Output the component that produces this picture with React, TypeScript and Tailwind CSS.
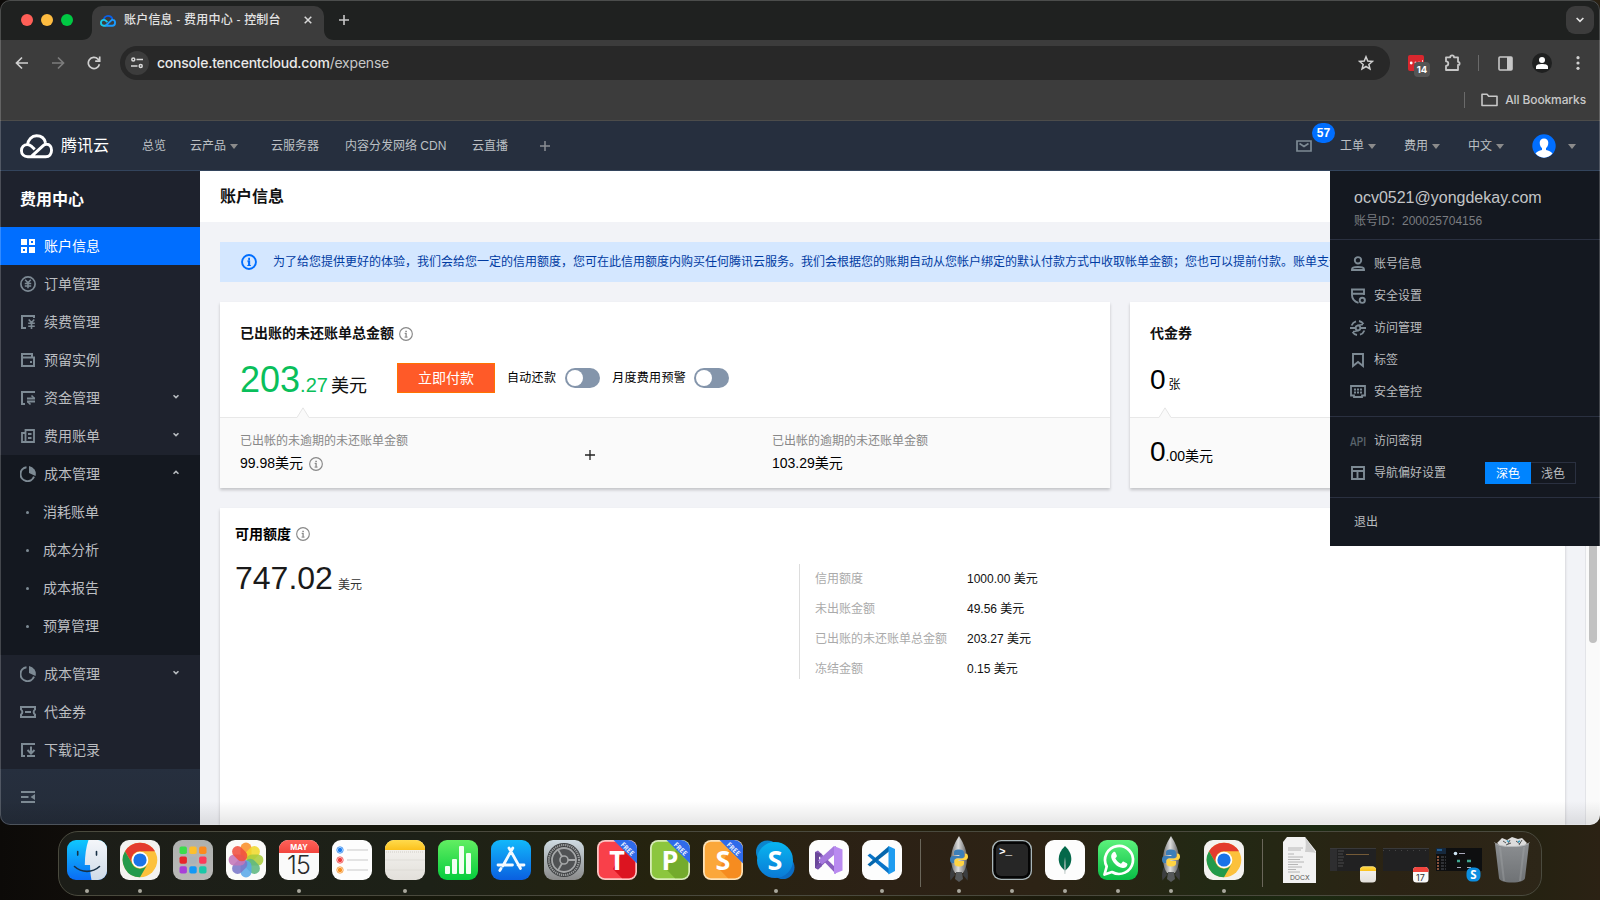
import React from "react";

const G = "#7d8a94";

/* ---------- shared pieces ---------- */

function TencentCloud({ className, stroke }: { className: string; stroke: string }) {
  return (
    <svg className={className} viewBox="0 0 34 25" fill="none" stroke={stroke} strokeWidth="3" strokeLinejoin="round">
      <path d="M7.500 11.500C8 5.500 12.300 1.500 17 1.500c4.800 0 8.300 3 9.300 7.300" />
      <path d="M11.500 22.900 24.200 11.300c1.100-.9 2.200-1.200 3.300-1.100 3 .1 5 2.600 5 6.200 0 3.900-2.300 6.600-6 6.600H8c-4 0-6.500-2.500-6.500-6.100 0-3.700 2.500-6.300 6-6.300 1.900 0 3.500.9 4.800 2.100l2.900 2.800" />
    </svg>
  );
}

function Caret({ className = "" }: { className?: string }) {
  return (
    <svg className={`h-[5px] w-2 shrink-0 ${className}`} viewBox="0 0 8 5">
      <path d="M0 0h8L4 5z" fill="#8b8b8b" />
    </svg>
  );
}

function Info({ className, color, sw = 1.3 }: { className: string; color: string; sw?: number }) {
  return (
    <svg className={className} viewBox="0 0 16 16" fill="none" stroke={color} strokeWidth={sw}>
      <circle cx="8" cy="8" r={8 - sw / 2 - 0.1} />
      <path d="M6.500 7.300h1.600V12M7.200 4.900h1.800" strokeWidth={sw + 0.2} />
      <path d="M6.300 11.500h3.600" strokeWidth="1" />
    </svg>
  );
}

/* ---------- browser chrome ---------- */

function TabStrip() {
  return (
    <div className="flex h-10 shrink-0 items-start bg-[#1f2120]">
      <div className="flex gap-2 pt-[14px] pl-[21px]">
        <span className="h-3 w-3 rounded-full bg-[#ff5f57]" />
        <span className="h-3 w-3 rounded-full bg-[#febc40]" />
        <span className="h-3 w-3 rounded-full bg-[#00c943]" />
      </div>
      <svg className="mt-[30px] ml-[9px] h-[10px] w-[10px]" viewBox="0 0 10 10">
        <path d="M10 0v10H0C6 10 10 6 10 0z" fill="#3c3c3c" />
      </svg>
      <div className="mt-[6px] flex h-[34px] w-[232px] items-center rounded-t-[10px] bg-[#3c3c3c] pb-[6px] pl-2">
        <svg className="mt-[1px] h-4 w-4" viewBox="0 0 34 30" fill="none" strokeWidth="4" strokeLinejoin="round">
          <path d="M7.500 14C8 8 12.300 4 17 4c4.800 0 8.300 3 9.300 7.300" stroke="#0a5fe8" />
          <path d="M11.500 25 24.200 13.600c1.100-.9 2.200-1.200 3.300-1.100 3 .1 4.500 2.600 4.500 6 0 3.900-2 6.500-6 6.500H11" stroke="#1a9bff" />
          <path d="M12 25H8c-4 0-6-2.500-6-6.100 0-3.700 2.500-6.300 6-6.300 1.900 0 3.500.9 4.800 2.100l2.900 2.800" stroke="#19c8e8" />
        </svg>
        <span className="ml-2 w-[170px] text-[12px] leading-4 font-medium tracking-[0.2px] whitespace-pre text-[#e3e3e3]">账户信息 - 费用中心 - 控制台</span>
        <svg className="ml-[10px] h-[8px] w-[8px]" viewBox="0 0 9 9" stroke="#d8d8d8" strokeWidth="1.700">
          <path d="M.8.8l7.400 7.400M8.200.8.800 8.200" />
        </svg>
      </div>
      <svg className="mt-[30px] h-[10px] w-[10px]" viewBox="0 0 10 10">
        <path d="M0 0v10h10C4 10 0 6 0 0z" fill="#3c3c3c" />
      </svg>
      <svg className="mt-[15px] ml-[5px] h-[10px] w-[10px]" viewBox="0 0 10 10" stroke="#c8c8c8" strokeWidth="1.600">
        <path d="M5 0v10M0 5h10" />
      </svg>
      <span className="mt-[6px] mr-[6px] ml-auto flex h-7 w-7 items-center justify-center rounded-[9px] bg-[#3c3c3c]">
        <svg className="h-[6px] w-[8px]" viewBox="0 0 9 6" fill="none" stroke="#e3e3e3" strokeWidth="1.800">
          <path d="M.7.8l3.800 3.800L8.300.8" />
        </svg>
      </span>
    </div>
  );
}

function Toolbar() {
  return (
    <div className="flex h-[46px] items-center pl-[15px]">
      <svg className="h-[14px] w-[14px]" viewBox="0 0 14 14" fill="none" stroke="#d0d0d0" strokeWidth="1.700">
        <path d="M13 7H1.800M7 1.500 1.500 7 7 12.500" />
      </svg>
      <svg className="ml-[22px] h-[14px] w-[14px]" viewBox="0 0 14 14" fill="none" stroke="#7c7c7c" strokeWidth="1.700">
        <path d="M1 7h11.200M7 1.500 12.500 7 7 12.500" />
      </svg>
      <svg className="ml-[22px] h-[14px] w-[14px]" viewBox="0 0 14 14" fill="none" stroke="#d0d0d0" strokeWidth="1.700">
        <path d="M12.400 8.200A5.600 5.600 0 1 1 11 3.100L12.500 4.800" />
        <path d="M12.700.6v4.600H8.200" />
      </svg>
      <div className="ml-[19px] flex h-[34px] w-[1270px] shrink-0 items-center rounded-full bg-[#282828] pr-4 pl-[5px]">
        <span className="flex h-6 w-6 items-center justify-center rounded-full bg-[#3c3c3c]">
          <svg className="h-3 w-3" viewBox="0 0 12 12" fill="none" stroke="#d8d8d8" strokeWidth="1.500">
            <circle cx="2.300" cy="2.500" r="1.500" />
            <path d="M5.500 2.500H12M0 9h6.500" />
            <circle cx="9.700" cy="9" r="1.500" />
          </svg>
        </span>
        <span className="ml-2 font-[Inter,Roboto,sans-serif] text-[14px] leading-5 font-medium tracking-[-0.22px] text-[#e8e8e8]">
          console.tencentcloud.com<span className="font-normal text-[#c7c7c7]">/expense</span>
        </span>
        <svg className="ml-auto h-4 w-4" viewBox="0 0 16 16" fill="none" stroke="#d0d0d0" strokeWidth="1.500">
          <path d="M8 1.800l1.750 4.300 4.650.35-3.550 3 1.100 4.550L8 11.500 4.050 14l1.100-4.550-3.550-3 4.650-.35z" />
        </svg>
      </div>
      <div className="relative ml-[18px] h-4 w-4 rounded-[2px] bg-[#d9272e]">
        <svg className="h-4 w-4" viewBox="0 0 16 16" fill="#fff">
          <circle cx="3.200" cy="8" r="1.400" />
          <circle cx="7.500" cy="7.500" r="1" opacity=".7" />
          <circle cx="11" cy="7.500" r="1" opacity=".7" />
          <path d="M14 5h1v3h-1z" opacity=".7" />
        </svg>
        <span className="absolute top-[7px] left-[6px] flex h-[15px] w-4 items-center justify-center rounded-[4px] bg-[#555555] font-[Inter,sans-serif] text-[9.5px] leading-none font-bold text-white">14</span>
      </div>
      <svg className="ml-[20px] h-[18px] w-[18px]" viewBox="0 0 18 18" fill="none" stroke="#c7c7c7" strokeWidth="1.800" strokeLinejoin="round">
        <path d="M2 3.300h4.200a1.900 1.900 0 0 1 3.800 0h4v4.500a1.600 1.600 0 0 1 0 3.200v5H2v-4.100a2.300 2.300 0 0 0 0-4.600z" />
      </svg>
      <span className="ml-[16px] h-4 w-px bg-[#6a6a6a]" />
      <svg className="ml-[19px] h-[15px] w-[15px]" viewBox="0 0 15 15">
        <rect x="1" y="1" width="13" height="13" rx="1" fill="none" stroke="#c7c7c7" strokeWidth="1.600" />
        <path d="M9 1h5v13H9z" fill="#c7c7c7" />
      </svg>
      <span className="ml-[19px] flex h-5 w-5 items-center justify-center rounded-full bg-[#1f2020]">
        <svg className="h-3 w-3" viewBox="0 0 12 12" fill="#fff">
          <circle cx="6" cy="3" r="3" />
          <path d="M0 12V9.500C0 7.800 3 7 6 7s6 .8 6 2.500V12z" />
        </svg>
      </span>
      <svg className="ml-[24px] h-[14px] w-1" viewBox="0 0 4 14" fill="#d0d0d0">
        <circle cx="2" cy="1.700" r="1.600" />
        <circle cx="2" cy="7" r="1.600" />
        <circle cx="2" cy="12.300" r="1.600" />
      </svg>
    </div>
  );
}

function Bookmarks() {
  return (
    <div className="flex h-[34px] items-center justify-end pr-[14px] pb-[6px]">
      <span className="h-4 w-px bg-[#6a6a6a]" />
      <svg className="mr-[7px] ml-4 h-[14px] w-[17px]" viewBox="0 0 17 14" fill="none" stroke="#c7c7c7" strokeWidth="1.600" strokeLinejoin="round">
        <path d="M1 12.500V1.300h5l1.700 2H16v9.200z" />
      </svg>
      <span className="font-[Inter,Roboto,sans-serif] text-[12px] leading-4 font-medium tracking-[-0.12px] text-[#c9c9c9]">All Bookmarks</span>
    </div>
  );
}

/* ---------- console header ---------- */

function ConsoleHeader() {
  return (
    <header className="flex h-[51px] shrink-0 items-center border-t border-b border-t-[#4c4c4a] border-b-[#33445c] bg-[#262f3e] text-[12px] leading-4 text-[#bcc0c4]">
      <TencentCloud className="mt-px ml-[20px] h-[25px] w-[33px]" stroke="#ffffff" />
      <span className="mt-px ml-[8px] w-[81px] text-[16px] leading-6 text-white">腾讯云</span>
      <span className="w-12">总览</span>
      <span className="flex w-[81px] items-center gap-1">云产品<Caret className="mt-px" /></span>
      <span className="w-[74px]">云服务器</span>
      <span className="w-[127px] whitespace-nowrap">内容分发网络 CDN</span>
      <span>云直播</span>
      <svg className="ml-[32px] h-[10px] w-[10px]" viewBox="0 0 10 10" stroke="#8b8f94" strokeWidth="1.500">
        <path d="M5 0v10M0 5h10" />
      </svg>
      <div className="ml-auto flex items-center pr-6">
        <div className="relative mr-[28px] h-3 w-4">
          <svg className="h-3 w-4" viewBox="0 0 16 12" fill="none" stroke="#7d8a94" strokeWidth="1.700">
            <path d="M1 1h14v10H1zM3.500 3.500 8 6.500l4.500-3" />
          </svg>
          <span className="absolute top-[-17px] left-4 flex h-5 w-[23px] items-center justify-center rounded-full bg-[#006eff] text-[12px] font-bold text-white">57</span>
        </div>
        <span className="flex w-16 items-center gap-1">工单<Caret className="mt-px" /></span>
        <span className="flex w-16 items-center gap-1">费用<Caret className="mt-px" /></span>
        <span className="flex w-16 items-center gap-1">中文<Caret className="mt-px" /></span>
        <svg className="h-6 w-6" viewBox="0 0 24 24">
          <circle cx="12" cy="12" r="11.700" fill="#006eff" />
          <path d="M12 4.500c2.700 0 4.300 1.800 4.300 4.300 0 2.600-1 4.300-2.300 5.200v2c2.500.7 5.200 1.300 6.500 3.600A11.700 11.700 0 0 1 12 23.700a11.700 11.700 0 0 1-8.500-4.100c1.300-2.300 4-2.900 6.500-3.600v-2c-1.300-.9-2.300-2.600-2.300-5.200 0-2.500 1.600-4.300 4.300-4.300z" fill="#fff" />
        </svg>
        <Caret className="mt-px ml-3" />
      </div>
    </header>
  );
}

/* ---------- sidebar ---------- */

type Kind = "grid" | "order" | "renew" | "wallet" | "fund" | "bill" | "pie" | "ticket" | "download";

function SideIcon({ kind }: { kind: Kind }) {
  const c = "h-4 w-4 shrink-0";
  const p = { className: c, viewBox: "0 0 16 16", fill: "none", stroke: G, strokeWidth: 2 };
  switch (kind) {
    case "grid":
      return (
        <svg className={c} viewBox="0 0 16 16" fill="#fff" fillRule="evenodd">
          <path d="M1 1h6v6H1zM9 1h6v6H9zm2 2v2h2V3zM1 9h6v6H1zm2 2v2h2v-2zM9 9h6v6H9z" />
        </svg>
      );
    case "order":
      return (
        <svg {...p} strokeWidth={1.700}>
          <circle cx="8" cy="8" r="7.100" />
          <path d="M5.200 3.800 8 6.800l2.800-3M8 6.800v5.500M4.800 7.500h6.400M4.800 10h6.400" strokeWidth="1.500" />
        </svg>
      );
    case "renew":
      return (
        <svg {...p}>
          <path d="M6 14H2V2h12v2M5 2h2" />
          <path d="M8.700 5.500l2.800 3L14.300 5.500M11.500 8.500V15M8.200 9.300h6.600M8.200 12.300h6.600" strokeWidth="1.600" />
        </svg>
      );
    case "wallet":
      return (
        <svg {...p}>
          <path d="M2 15V2h10v3M2 5.500h12V14H1" />
          <path d="M10 9h2v2h-2z" fill={G} stroke="none" />
        </svg>
      );
    case "fund":
      return (
        <svg {...p}>
          <path d="M5 14H2V2h13M7 8.500h8M15 11.500H7" />
          <path d="M11.500 5.500 14.500 8.500M10.500 14.500 7.500 11.500" strokeWidth="1.600" />
        </svg>
      );
    case "bill":
      return (
        <svg {...p} strokeWidth={1.800}>
          <path d="M5.500 14H2V5h3.500M5.500 14V2H14v12zM8 6h3.500M8 10h3.500" />
        </svg>
      );
    case "pie":
      return (
        <svg {...p}>
          <path d="M6.500 1.200a7 7 0 1 0 7.500 9.500" />
          <path d="M9 0a8 8 0 0 1 6.500 10L9 7z" fill={G} stroke="none" />
        </svg>
      );
    case "ticket":
      return (
        <svg {...p}>
          <path d="M1 3h14v2.500a3 3 0 0 0 0 5V13H1v-2.500a3 3 0 0 0 0-5zM5 8h6" />
        </svg>
      );
    default:
      return (
        <svg {...p}>
          <path d="M5 14H2V2h13M7 14h8M11 4.500v7M7.500 8 11 11.500 14.500 8" />
        </svg>
      );
  }
}

function Chevron({ up }: { up?: boolean }) {
  return (
    <svg className="mb-[3px] ml-auto h-[5px] w-[6px]" viewBox="0 0 7 5" fill="none" stroke="#b9bdc1" strokeWidth="1.800">
      <path d={up ? "M.6 4 3.500 1.200 6.400 4" : "M.6 1 3.500 3.800 6.400 1"} />
    </svg>
  );
}

function SideRow({ kind, label, arrow, active }: { kind: Kind; label: string; arrow?: "up" | "down"; active?: boolean }) {
  return (
    <div className={`flex h-[38px] items-center pr-[21px] pl-5 ${active ? "bg-[#006eff] text-white" : ""}`}>
      <SideIcon kind={kind} />
      <span className="ml-2">{label}</span>
      {arrow && <Chevron up={arrow === "up"} />}
    </div>
  );
}

function Sidebar() {
  return (
    <nav className="flex w-[200px] shrink-0 flex-col bg-[#1e222d] text-[14px] leading-5 text-[#bbbdc0]">
      <div className="flex h-14 items-center pt-[2px] pl-[20px] text-[16px] font-bold text-white">费用中心</div>
      <SideRow kind="grid" label="账户信息" active />
      <SideRow kind="order" label="订单管理" />
      <SideRow kind="renew" label="续费管理" />
      <SideRow kind="wallet" label="预留实例" />
      <SideRow kind="fund" label="资金管理" arrow="down" />
      <SideRow kind="bill" label="费用账单" arrow="down" />
      <div className="bg-[#141820] pb-[10px]">
        <SideRow kind="pie" label="成本管理" arrow="up" />
        {["消耗账单", "成本分析", "成本报告", "预算管理"].map((t) => (
          <div key={t} className="flex h-[38px] items-center pl-[26px]">
            <span className="h-[3px] w-[3px] rounded-full bg-[#7d8a94]" />
            <span className="ml-[14px]">{t}</span>
          </div>
        ))}
      </div>
      <SideRow kind="pie" label="成本管理" arrow="down" />
      <SideRow kind="ticket" label="代金券" />
      <SideRow kind="download" label="下载记录" />
      <div className="flex flex-1 items-center bg-linear-to-b from-[#262f3e] to-[#242c39] pl-[21px]">
        <svg className="h-3 w-[14px]" viewBox="0 0 14 12" fill={G}>
          <path d="M0 0h14v2H0zM0 5h7.500v2H0zM0 10h14v2H0zM14 3v6L9.500 6z" />
        </svg>
      </div>
    </nav>
  );
}

/* ---------- content ---------- */

function Toggle() {
  return (
    <span className="mt-[-2px] flex h-5 w-[35px] rounded-full bg-[#8495ab] p-[2px]">
      <span className="h-4 w-4 rounded-full bg-white" />
    </span>
  );
}

function Notch({ className }: { className: string }) {
  return (
    <svg className={`absolute top-[-11px] h-[11px] w-3 ${className}`} viewBox="0 0 12 11">
      <path d="M0 10.500 6 .8l6 9.700V11H0z" fill="#fafafa" />
      <path d="M0 10.500 6 .8l6 9.700" fill="none" stroke="#e5e5e5" />
    </svg>
  );
}

const creditRows = [
  ["信用额度", "1000.00 美元"],
  ["未出账金额", "49.56 美元"],
  ["已出账的未还账单总金额", "203.27 美元"],
  ["冻结金额", "0.15 美元"],
];

const card = "bg-white shadow-[0_2px_3px_rgba(0,0,0,0.2)]";

function Content() {
  return (
    <main className="flex min-w-0 flex-1 flex-col bg-[#f2f3f7] text-[#000000]">
      <div className="flex h-[51px] shrink-0 items-center bg-white pl-5 text-[16px] leading-6 font-bold text-[#111111]">账户信息</div>
      <div className="mt-5 ml-5 flex h-10 w-[1345px] shrink-0 items-center overflow-hidden bg-[#d4e7ff] pl-[21px]">
        <Info className="h-4 w-4 shrink-0" color="#006eff" sw={1.900} />
        <span className="ml-4 text-[12px] leading-4 whitespace-nowrap text-[#003ba2]">
          为了给您提供更好的体验，我们会给您一定的信用额度，您可在此信用额度内购买任何腾讯云服务。我们会根据您的账期自动从您帐户绑定的默认付款方式中收取帐单金额；您也可以提前付款。账单支付
        </span>
      </div>
      <div className="mt-5 ml-5 flex h-[186px] w-[1345px] shrink-0 gap-5">
        <section className={`flex w-[890px] flex-col ${card}`}>
          <div className="h-[115px] shrink-0 px-5 pt-[21px]">
            <div className="flex h-5 items-center gap-[5px] text-[14px] leading-5 font-bold text-[#111111]">
              已出账的未还账单总金额
              <Info className="mt-px h-[14px] w-[14px]" color="#888888" />
            </div>
            <div className="mt-[15px] flex h-[42px] items-center">
              <span className="mt-[8px] w-[157px] text-[36px] leading-[42px] whitespace-nowrap text-[#0abf5b]">
                203<span className="text-[20px]">.27</span> <span className="ml-[-7px] text-[18px] text-[#111111]">美元</span>
              </span>
              <button className="mt-[-2px] flex h-[30px] w-[98px] items-center justify-center border border-[#ff7200] bg-[#ff5a28] text-[14px] text-white">立即付款</button>
              <span className="mt-[-3px] ml-3 text-[12px] leading-4 tracking-[0.3px]">自动还款</span>
              <span className="ml-[9px]"><Toggle /></span>
              <span className="mt-[-3px] ml-3 text-[12px] leading-4 tracking-[0.3px]">月度费用预警</span>
              <span className="ml-[8px]"><Toggle /></span>
            </div>
          </div>
          <div className="relative flex flex-1 border-t border-[#e8e8e8] bg-[#fafafa] pt-[15px] pl-5">
            <Notch className="left-[77px]" />
            <div className="w-[345px]">
              <div className="text-[12px] leading-4 text-[#888888]">已出帐的未逾期的未还账单金额</div>
              <div className="mt-[4px] flex h-5 items-center gap-[6px] text-[14px] leading-5">
                99.98美元
                <Info className="mt-px h-[14px] w-[14px]" color="#888888" />
              </div>
            </div>
            <svg className="mt-[17px] h-[10px] w-[10px]" viewBox="0 0 10 10" stroke="#222" strokeWidth="1.300">
              <path d="M5 0v10M0 5h10" />
            </svg>
            <div className="ml-[177px]">
              <div className="text-[12px] leading-4 text-[#888888]">已出帐的逾期的未还账单金额</div>
              <div className="mt-[4px] text-[14px] leading-5">103.29美元</div>
            </div>
          </div>
        </section>
        <section className={`flex flex-1 flex-col ${card}`}>
          <div className="h-[115px] shrink-0 px-5 pt-[21px]">
            <div className="text-[14px] leading-5 font-bold text-[#111111]">代金券</div>
            <div className="mt-[16px] text-[28px] leading-[42px]">
              0<span className="ml-[3px] text-[12px]">张</span>
            </div>
          </div>
          <div className="relative h-[71px] border-t border-[#e8e8e8] bg-[#fafafa] pl-5 text-[28px] leading-[68px]">
            <Notch className="left-[29px]" />
            0<span className="text-[14px]">.00美元</span>
          </div>
        </section>
      </div>
      <section className={`mt-5 ml-5 w-[1345px] flex-1 px-[15px] pt-4 ${card}`}>
        <div className="flex h-5 items-center gap-[5px] text-[14px] leading-5 font-bold">
          可用额度
          <Info className="h-[14px] w-[14px]" color="#888888" />
        </div>
        <div className="mt-[15px] flex">
          <div className="mt-[-1px] w-[564px] text-[32px] leading-10 text-[#1a1a1a]">
            747.02<span className="ml-[5px] text-[12px] text-[#333333]">美元</span>
          </div>
          <div className="mt-[5px] h-[115px] border-l border-[#dddddd] pl-[15px]">
            {creditRows.map(([k, v]) => (
              <div key={k} className="flex h-[30px] items-center text-[12px] leading-4">
                <span className="w-[152px] text-[#aaaaaa]">{k}</span>
                <span className="text-[#111111]">{v}</span>
              </div>
            ))}
          </div>
        </div>
      </section>
    </main>
  );
}

/* ---------- account menu ---------- */

type MenuKind = "user" | "shield" | "access" | "tag" | "board" | "api" | "layout";

function MenuIcon({ kind }: { kind: MenuKind }) {
  const p = { className: "h-4 w-4 shrink-0", viewBox: "0 0 16 16", fill: "none", stroke: G, strokeWidth: 1.900 };
  switch (kind) {
    case "user":
      return (
        <svg {...p}>
          <circle cx="8" cy="4.300" r="3.200" />
          <path d="M2 14v-.8C2 11.500 4.500 11 8 11s6 .5 6 2.200v.8z" />
        </svg>
      );
    case "shield":
      return (
        <svg {...p}>
          <path d="M8.500 14.800C4 13.500 2 11 2 7V1.500h12V7M2 5.700h12" />
          <circle cx="12.300" cy="12.300" r="2.600" />
        </svg>
      );
    case "access":
      return (
        <svg {...p} strokeWidth={1.800}>
          <path d="M1.600 5.500A7 7 0 0 1 6 1.300M9 1A7 7 0 0 1 13.500 4M14.400 10.500a7 7 0 0 1-4.400 4.200M7 15A7 7 0 0 1 2.500 12M0 8h5.500M10.500 8H16" />
          <circle cx="8" cy="8" r="2.300" />
          <path d="M7 5.500c2 0 3.500-1 6-1M9 10.500c-2 0-3.500 1-6 1" strokeWidth="1.400" />
        </svg>
      );
    case "tag":
      return (
        <svg {...p}>
          <path d="M3 14V2h10v12l-5-4z" />
        </svg>
      );
    case "board":
      return (
        <svg {...p} strokeWidth={1.800}>
          <path d="M1 2h14v9.500h-3V13H4v-1.500H1z" />
          <path d="M4 5.500h2M7 5.500h2M10 5.500h2M4 8.500h2M7 8.500h2M10 8.500h2" />
        </svg>
      );
    case "api":
      return (
        <svg className="h-4 w-4 shrink-0 overflow-visible" viewBox="0 0 16 16">
          <text x="0" y="12.800" textLength="16" lengthAdjust="spacingAndGlyphs" fontSize="13" fontWeight="500" fill="#5a646d" fontFamily="Roboto, sans-serif">API</text>
        </svg>
      );
    default:
      return (
        <svg {...p}>
          <path d="M2 2h12v12H2zM2 6h12M7.500 6v8" />
        </svg>
      );
  }
}

function MenuRow({ kind, label, children }: { kind: MenuKind; label: string; children?: React.ReactNode }) {
  return (
    <div className="flex h-8 items-center pr-6 pl-5">
      <MenuIcon kind={kind} />
      <span className="ml-2">{label}</span>
      {children}
    </div>
  );
}

function AccountMenu() {
  return (
    <div className="absolute top-[171px] right-0 h-[375px] w-[270px] bg-[#141820] text-[12px] leading-4 text-[#b9bbbe]">
      <div className="h-[69px] border-b border-[#2a3040] pt-[17px] pl-6">
        <div className="text-[16px] leading-5 text-[#c3c5c7]">ocv0521@yongdekay.com</div>
        <div className="mt-[5px] text-[#7b7d80]">账号ID：200025704156</div>
      </div>
      <div className="h-[177px] border-b border-[#2a3040] pt-2">
        <MenuRow kind="user" label="账号信息" />
        <MenuRow kind="shield" label="安全设置" />
        <MenuRow kind="access" label="访问管理" />
        <MenuRow kind="tag" label="标签" />
        <MenuRow kind="board" label="安全管控" />
      </div>
      <div className="h-[81px] border-b border-[#2a3040] pt-2">
        <MenuRow kind="api" label="访问密钥" />
        <MenuRow kind="layout" label="导航偏好设置">
          <span className="ml-auto flex h-[22px] w-[91px]">
            <span className="flex w-[46px] items-center justify-center bg-[#0084ff] pt-px text-white">深色</span>
            <span className="flex w-[45px] items-center justify-center border border-l-0 border-[#2a3040] pt-px">浅色</span>
          </span>
        </MenuRow>
      </div>
      <div className="flex h-12 items-center pl-6">退出</div>
    </div>
  );
}

/* ---------- dock icons ---------- */

const ic = "h-[42px] w-10 shrink-0";
const vb = "0 0 40 42";

function Defs() {
  const g = (id: string, a: string, b: string) => (
    <linearGradient id={id} x1="0" y1="0" x2="0" y2="1">
      <stop offset="0" stopColor={a} />
      <stop offset="1" stopColor={b} />
    </linearGradient>
  );
  return (
    <svg className="absolute h-0 w-0">
      <defs>
        {g("finder", "#10c8fd", "#0a6cf5")}
        {g("face", "#f4f6fa", "#cfdbe8")}
        {g("launch", "#aeb0ae", "#b9b9b7")}
        {g("cal", "#ff6259", "#f2453e")}
        {g("noteTop", "#ffdb4d", "#fbc11c")}
        {g("noteBody", "#f7f5f2", "#e3e0db")}
        {g("numbers", "#62ee62", "#05cc3c")}
        {g("store", "#12b8fb", "#0a5fe0")}
        {g("settings", "#cfdbe2", "#8a8a8a")}
        {g("skype", "#08b6f0", "#0a79d6")}
        {g("wa", "#5cf27c", "#08bd45")}
        {g("metal", "#8c8f92", "#6f7275")}
        <linearGradient id="rocket" x1="0" y1="0" x2="1" y2="0">
          <stop offset="0" stopColor="#6d6f71" />
          <stop offset=".45" stopColor="#dedede" />
          <stop offset="1" stopColor="#5d5f61" />
        </linearGradient>
      </defs>
    </svg>
  );
}

const Base = ({ fill }: { fill: string }) => <rect x="0" y="1" width="40" height="40" rx="9" fill={fill} />;

function Finder() {
  return (
    <svg className={ic} viewBox={vb}>
      <Base fill="url(#finder)" />
      <path d="M21.500 1H31a9 9 0 0 1 9 9v22a9 9 0 0 1-9 9h-6.500c-.8-4-1.400-9-1.500-15h-5.200C18 16 19 8 21.500 1z" fill="url(#face)" />
      <path d="M10.700 12.500v3.600M29.500 12.500v3.600M7.500 27.500c7 6.500 18 6.500 25 0" fill="none" stroke="#173045" strokeWidth="1.600" strokeLinecap="round" />
    </svg>
  );
}

function Chrome() {
  return (
    <svg className={ic} viewBox={vb}>
      <Base fill="#f3f2f0" />
      <g transform="translate(20 21)">
        <circle r="17.300" fill="#fcc13c" />
        <path d="M-15 -8.650A17.300 17.300 0 0 1 15 -8.650H0A8.650 8.650 0 0 0-7.500 4.300z" fill="#e33b2e" />
        <path d="M-15 -8.650-7.500 4.330A8.650 8.650 0 0 0 7.500 4.330L0 17.300A17.300 17.300 0 0 1-15-8.650z" fill="#229a4b" />
        <circle r="8.300" fill="#fff" />
        <circle r="6.600" fill="#1a73e8" />
      </g>
    </svg>
  );
}

function Launchpad() {
  const cols = ["#3bdc4b", "#fdbf2c", "#fb8a1e", "#e8252a", "#a9b3b8", "#fd3a5a", "#a83fd8", "#1398f5", "#1bc8a8"];
  return (
    <svg className={ic} viewBox={vb}>
      <Base fill="url(#launch)" />
      {cols.map((c, i) => (
        <rect key={c} x={6.500 + (i % 3) * 9.800} y={7.600 + Math.floor(i / 3) * 9.800} width="7.400" height="7.400" rx="1.800" fill={c} />
      ))}
    </svg>
  );
}

function Photos() {
  const cols = ["#f98f2a", "#f0d92e", "#aacc3c", "#5fb780", "#5aa9e8", "#7a78c8", "#c476b8", "#f0503f"];
  return (
    <svg className={ic} viewBox={vb}>
      <Base fill="#fbfbf9" />
      {cols.map((c, i) => (
        <rect key={c} x="14.500" y="3.600" width="11" height="17" rx="5.500" fill={c} opacity=".88" transform={`rotate(${i * 45} 20 21)`} />
      ))}
    </svg>
  );
}

function Calendar() {
  return (
    <svg className={ic} viewBox={vb}>
      <Base fill="#fafafa" />
      <path d="M9 1h22a9 9 0 0 1 9 9v4H0v-4a9 9 0 0 1 9-9z" fill="url(#cal)" />
      <text x="20" y="10.800" textAnchor="middle" fontSize="7.500" fontWeight="700" fill="#fff" fontFamily="Inter">MAY</text>
      <text x="19.500" y="34.800" textAnchor="middle" fontSize="25" fontWeight="300" letterSpacing="-.8" fill="#2c2c2c" fontFamily="Inter">15</text>
    </svg>
  );
}

function Reminders() {
  return (
    <svg className={ic} viewBox={vb}>
      <Base fill="#fdfdfd" />
      {["#1a7df0", "#f03b3b", "#f88f1e"].map((c, i) => (
        <g key={c}>
          <circle cx="8" cy={11 + i * 10} r="3.200" fill="none" stroke={c} strokeWidth=".8" />
          <circle cx="8" cy={11 + i * 10} r="2.200" fill={c} />
          <path d={`M15 ${11 + i * 10}h21`} stroke="#c9c9c9" />
        </g>
      ))}
    </svg>
  );
}

function Notes() {
  return (
    <svg className={ic} viewBox={vb}>
      <Base fill="url(#noteBody)" />
      <path d="M9 1h22a9 9 0 0 1 9 9v1H0v-1a9 9 0 0 1 9-9z" fill="url(#noteTop)" />
      <path d="M1 13h38" stroke="#c9c5bd" strokeDasharray=".8 1.200" />
      <path d="M0 21h40M0 31h40" stroke="#dad7d1" strokeWidth=".7" />
    </svg>
  );
}

function Numbers() {
  return (
    <svg className={ic} viewBox={vb}>
      <Base fill="url(#numbers)" />
      <g fill="#f2fff2">
        <rect x="7" y="27" width="5" height="8" rx="1" />
        <rect x="14" y="20" width="5" height="15" rx="1" />
        <rect x="21" y="7" width="5" height="28" rx="1" />
        <rect x="28" y="14" width="5" height="21" rx="1" />
      </g>
    </svg>
  );
}

function AppStore() {
  return (
    <svg className={ic} viewBox={vb}>
      <Base fill="url(#store)" />
      <path d="M21.800 9 11.800 27M18 9l11.500 20.500M7 26h14.500M27 26h6M10 29.500l-1.200 2" stroke="#f4faff" strokeWidth="2.800" strokeLinecap="round" />
    </svg>
  );
}

function Settings() {
  return (
    <svg className={ic} viewBox={vb}>
      <Base fill="url(#settings)" />
      <g transform="translate(20 21)" fill="none">
        <circle r="17" fill="#3e4042" />
        <circle r="15" stroke="#9a9c9d" strokeWidth="2.200" strokeDasharray="1.300 .8" />
        <circle r="12" stroke="#a5a7a8" strokeWidth="1.800" fill="#505254" />
        <circle r="4" stroke="#a5a7a8" strokeWidth="1.600" />
        <path d="M4 0h8M-2 -3.500-6-10.400M-2 3.500-6 10.400" stroke="#a5a7a8" strokeWidth="1.800" />
      </g>
    </svg>
  );
}

function Office({ letter, a, b, edge }: { letter: string; a: string; b: string; edge: string }) {
  return (
    <svg className={ic} viewBox={vb}>
      <rect x="0" y="1" width="40" height="40" rx="8" fill={edge} />
      <rect x="1.800" y="2.800" width="36.400" height="36.400" rx="6" fill={a} />
      <path d="M26 11 38.200 23v10a6 6 0 0 1-6 6.200H25L16 30z" fill={b} />
      <text x="20" y="31" textAnchor="middle" fontSize="27" fontWeight="700" fill="#fff" fontFamily="Open Sans">{letter}</text>
      <path d="M16.500 1H31a9 9 0 0 1 9 9v14.500z" fill="#2f6bea" />
      <text transform="translate(23.200 6) rotate(45)" fontSize="6.800" fontWeight="700" fill="#e9f0ff" fontFamily="Open Sans">FREE</text>
    </svg>
  );
}

function Skype() {
  return (
    <svg className={ic} viewBox={vb}>
      <circle cx="11.500" cy="13" r="11.500" fill="#0c84cc" />
      <circle cx="27" cy="28.500" r="11.500" fill="#0b6cc4" />
      <circle cx="19" cy="21" r="18" fill="url(#skype)" />
      <text x="19" y="31" textAnchor="middle" fontSize="27" fontWeight="700" fill="#fff" fontFamily="Open Sans">S</text>
    </svg>
  );
}

function VisualStudio() {
  return (
    <svg className={ic} viewBox={vb}>
      <Base fill="#fdfdfd" />
      <path d="M6 13l3-1.500L27 29v6z" fill="#8a5fc0" />
      <path d="M6 13v16l3 1.500 4-3.500-3-3v-6l3-3z" fill="#6a4799" />
      <path d="M9 30.500 27 13V7L6.500 28z" fill="#7a52b0" />
      <path d="M25 7l8.500 3.500v21L25 35V7z" fill="#b98af0" />
      <path d="M25 7 9 21.500l4 4L25 16z" fill="#a679de" />
    </svg>
  );
}

function VSCode() {
  return (
    <svg className={ic} viewBox={vb}>
      <Base fill="#fdfdfd" />
      <path d="M5.500 16.500 8 14.500 27 29.500V35z" fill="#0a74c8" />
      <path d="M5.500 25.500 8 27.500 27 12.500V7z" fill="#0566ad" />
      <path d="M26.500 7 33 10v22l-6.500 3.500z" fill="#1f9cf0" />
    </svg>
  );
}

function Rocket() {
  return (
    <svg className="mt-[-3px] h-[46px] w-10 shrink-0" viewBox="0 0 40 46">
      <path d="M13.500 30c-2.500 4-3 9-2 14.500l4.500-5.500M26.500 30c2.500 4 3 9 2 14.500L24 39" fill="#3c3e40" />
      <path d="M20 0c5 8 8 15 8 23 0 6-2 11-4 14h-8c-2-3-4-8-4-14 0-8 3-15 8-23z" fill="url(#rocket)" />
      <path d="M17 36h6l1 7-4 3-4-3z" fill="#55585a" />
      <path d="M20 13.500c-3.800 0-5 1.200-5 3.200V19h5.500v1H14c-2 0-3 1.200-3 3.400 0 2.400.8 3.600 2.800 3.600H15v-1.500c0-1.800 1.200-3 3-3h4.500c1.400 0 2.500-1 2.500-2.400v-3.600c0-2-1.600-3-5-3z" fill="#3d7fb8" />
      <path d="M20 30.500c3.800 0 5-1.200 5-3.200V25h-5.500v-1H26c2 0 3-1.200 3-3.200 0-2.200-.8-3.400-2.800-3.400H26v2c0 1.800-1.600 3-3.400 3H18c-1.400 0-2.500 1-2.500 2.400v2.700c0 2 1.400 3 4.500 3z" fill="#ffd444" />
    </svg>
  );
}

function Terminal() {
  return (
    <svg className={ic} viewBox={vb}>
      <Base fill="#a9b6b9" />
      <rect x="1.300" y="2.300" width="37.400" height="37.400" rx="8" fill="#050505" />
      <rect x="4" y="5" width="32" height="32" rx="5" fill="#262626" />
      <text x="7" y="15.500" fontSize="11" fontWeight="700" fill="#fff" fontFamily="Liberation Mono">&gt;_</text>
    </svg>
  );
}

function Mongo() {
  return (
    <svg className={ic} viewBox={vb}>
      <Base fill="#fdfdfd" />
      <path d="M20 7c4.500 4.500 6.300 8.500 6.300 13 0 5-2.500 9-6.300 11.500-3.800-2.500-6.300-6.500-6.300-11.500 0-4.500 1.800-8.500 6.300-13z" fill="#04684a" />
      <path d="M20 18c.8 6 .8 11 .3 17h-.7c-.5-6-.5-11 .4-17z" fill="#b8c4c2" />
    </svg>
  );
}

function WhatsApp() {
  return (
    <svg className={ic} viewBox={vb}>
      <Base fill="url(#wa)" />
      <path d="M6.500 35.500l2.200-8A14 14 0 1 1 14 33z" fill="none" stroke="#fff" strokeWidth="2.700" strokeLinejoin="round" />
      <path d="M15.300 13.200c.7-.6 1.800-.5 2.200.3l1.300 3c.2.500 0 1-.3 1.400l-1.200 1.400c1.300 2.600 3 4.200 5.700 5.400l1.500-1.700c.3-.4.800-.5 1.300-.3l3 1.500c.6.300.8.900.6 1.500-.6 2.400-2.500 3.500-4.700 3.300-5.500-.8-10.400-5.500-11.500-10.800-.3-2 .5-4 2.100-5z" fill="#fff" />
    </svg>
  );
}

function Docx() {
  return (
    <svg className="mt-[-2px] h-[46px] w-[34px] shrink-0" viewBox="0 0 34 46">
      <path d="M4 0h18l11 14v32H0V5z" fill="#f2f2f2" />
      <path d="M22 0c1 5 1 10 0 15 4 0 8 0 11 1z" fill="#cfcfcf" />
      <path d="M5 11h15M5 13h13M5 17h6M5 20h15M5 22.500h12M5 25h16M5 27.500h10M5 30h14M5 32.500h8M5 35h12" stroke="#a6a6a6" strokeWidth=".8" />
      <text x="16.800" y="43" textAnchor="middle" fontSize="6.800" fill="#555" fontFamily="Inter">DOCX</text>
    </svg>
  );
}

function MiniNotes() {
  return (
    <svg className="h-[42px] w-[46px] shrink-0 overflow-visible" viewBox="0 0 46 42">
      <path d="M0 9h46v23H0z" fill="#212122" />
      <path d="M0 9h7v23H0z" fill="#2e2e30" />
      <path d="M0 9.500h46" stroke="#39393a" />
      <path d="M8 12h6M8 15h5M8 18h6M8 21h5M8 24h6M8 27h5" stroke="#4a4a4a" />
      <path d="M16 15.500h23" stroke="#8a6a3c" strokeWidth=".8" />
      <svg x="30" y="27" width="16" height="17" viewBox={vb}>
        <Base fill="url(#noteBody)" />
        <path d="M9 1h22a9 9 0 0 1 9 9v2H0v-2a9 9 0 0 1 9-9z" fill="url(#noteTop)" />
      </svg>
    </svg>
  );
}

function MiniCalendar() {
  return (
    <svg className="h-[42px] w-[46px] shrink-0 overflow-visible" viewBox="0 0 46 42">
      <path d="M0 9h46v23H0z" fill="#212122" />
      <path d="M0 9.500h46" stroke="#39393a" />
      <path d="M0 11.500h46" stroke="#444" strokeDasharray="1 5" />
      <rect x="30" y="28" width="15.500" height="15.500" rx="3.500" fill="#fafafa" />
      <path d="M33.500 28h8.500a3.500 3.500 0 0 1 3.500 3.500V33H30v-1.500a3.500 3.500 0 0 1 3.500-3.500z" fill="#f2453e" />
      <text x="37.500" y="41.500" textAnchor="middle" fontSize="9" fill="#333" fontFamily="Inter">17</text>
    </svg>
  );
}

function MiniSkype() {
  return (
    <svg className="h-[42px] w-[46px] shrink-0 overflow-visible" viewBox="0 0 46 42">
      <path d="M0 9h46v23H0z" fill="#0e0f10" />
      <path d="M0 9h10v6H0z" fill="#16283c" />
      <path d="M1 11h5" stroke="#2d8fe0" />
      <path d="M1 18h2M1 21h2M1 24h2M1 27h2M1 30h2" stroke="#b06a4a" strokeWidth="1.500" />
      <path d="M5 18h5M5 21h5M5 24h5M5 27h5M5 30h5" stroke="#50555a" strokeDasharray="3 1" />
      <circle cx="19.500" cy="14.500" r="1.800" fill="#cfe6f5" />
      <path d="M23 14.500h6M21 28.500h4M31 28.500h4" stroke="#aab" />
      <path d="M21 22h3M31 22h4" stroke="#3fa58f" strokeWidth="2.500" />
      <rect x="30.500" y="28.500" width="14" height="14" rx="5.500" fill="#0c8ee0" />
      <text x="37.500" y="39.800" textAnchor="middle" fontSize="11.500" fontWeight="700" fill="#fff" fontFamily="Open Sans">S</text>
    </svg>
  );
}

function Trash() {
  return (
    <svg className="mt-[-2px] h-[46px] w-9 shrink-0" viewBox="0 0 36 46">
      <path d="M3 6 8 1l5 2 5-3 6 2 4-1 5 5-4 5H8z" fill="#dcdcdc" />
      <path d="M9 4l3 2M16 3l-2 4M22 4l4 3M28 3l-3 5M12 8l5-2" stroke="#555" />
      <path d="M13 3.500l2 1.500M24 5l2-1" stroke="#36a3c8" strokeWidth="1.500" />
      <path d="M.8 5.500 5 41c.3 2.500 5 4.500 13 4.500S30.700 43.500 31 41l4.200-35.500C34 8 27 9.500 18 9.500S2 8 .8 5.500z" fill="url(#metal)" />
      <path d="M6 10l4 34M30 10l-4 34" stroke="#a3a6a8" opacity=".4" strokeWidth="2" />
      <path d="M.8 5.500C3 8.500 10 9.500 18 9.500s15-1 17.200-4" fill="none" stroke="#b9bcbe" />
    </svg>
  );
}

function Slot({ dot, children }: { dot?: boolean; children: React.ReactNode }) {
  return (
    <div className="flex w-[53px] shrink-0 flex-col items-center">
      <div className="flex h-[50px]">{children}</div>
      {dot && <span className="h-1 w-1 rounded-full bg-[#a9a89e]" />}
    </div>
  );
}

function Dock() {
  return (
    <div className="mt-[6px] ml-[58px] flex h-[65px] w-[1484px] rounded-[20px] border border-[#4a4a3e] bg-[linear-gradient(90deg,#1c1d18_0%,#1d2117_25%,#25230f_40%,#2c2115_55%,#2d2315_66%,#222914_78%,#2b2314_90%,#2d2618_100%)] pt-[7px]">
      <Defs />
      <span className="w-[1.5px] shrink-0" />
      <Slot dot><Finder /></Slot>
      <Slot dot><Chrome /></Slot>
      <Slot><Launchpad /></Slot>
      <Slot><Photos /></Slot>
      <Slot dot><Calendar /></Slot>
      <Slot><Reminders /></Slot>
      <Slot dot><Notes /></Slot>
      <Slot><Numbers /></Slot>
      <Slot><AppStore /></Slot>
      <Slot><Settings /></Slot>
      <Slot><Office letter="T" a="#f9404a" b="#dc1420" edge="#fbc6c4" /></Slot>
      <Slot><Office letter="P" a="#8cc63e" b="#74ab2c" edge="#d8ecb8" /></Slot>
      <Slot><Office letter="S" a="#fba73a" b="#f68c20" edge="#fde2b8" /></Slot>
      <Slot dot><Skype /></Slot>
      <Slot><VisualStudio /></Slot>
      <Slot dot><VSCode /></Slot>
      <span className="mx-[11.5px] h-12 w-px shrink-0 bg-[#6a665a]" />
      <Slot dot><Rocket /></Slot>
      <Slot dot><Terminal /></Slot>
      <Slot dot><Mongo /></Slot>
      <Slot dot><WhatsApp /></Slot>
      <Slot dot><Rocket /></Slot>
      <Slot dot><Chrome /></Slot>
      <span className="mx-[11px] h-12 w-px shrink-0 bg-[#6a665a]" />
      <Slot><Docx /></Slot>
      <Slot><MiniNotes /></Slot>
      <Slot><MiniCalendar /></Slot>
      <Slot><MiniSkype /></Slot>
      <Slot><Trash /></Slot>
    </div>
  );
}

export default function App() {
  return (
    <div className="h-[900px] w-[1600px] overflow-hidden bg-[linear-gradient(90deg,#0c0a08_0%,#15110c_10%,#171a0c_30%,#2b240e_50%,#1b1a0c_65%,#1c2a12_82%,#20220f_92%,#2b2214_100%)] font-['Liberation_Sans','Noto_Sans_CJK_SC',sans-serif]">
      <div className="relative flex h-[825px] flex-col overflow-hidden rounded-[10px] bg-[#3c3c3c]">
        <TabStrip />
        <Toolbar />
        <Bookmarks />
        <ConsoleHeader />
        <div className="flex min-h-0 flex-1">
          <Sidebar />
          <Content />
          <div className="w-[15px] shrink-0 border-l border-[#e3e4e8] bg-[#fafafa] pt-[345px] pl-[3px]">
            <div className="h-[127px] w-2 rounded-full bg-[#c1c1c1]" />
          </div>
        </div>
        <AccountMenu />
        <div className="pointer-events-none absolute inset-x-0 bottom-0 h-6 bg-linear-to-b from-transparent to-black/10" />
        <div className="pointer-events-none absolute inset-0 rounded-[10px] border border-white/20" />
      </div>
      <Dock />
    </div>
  );
}
